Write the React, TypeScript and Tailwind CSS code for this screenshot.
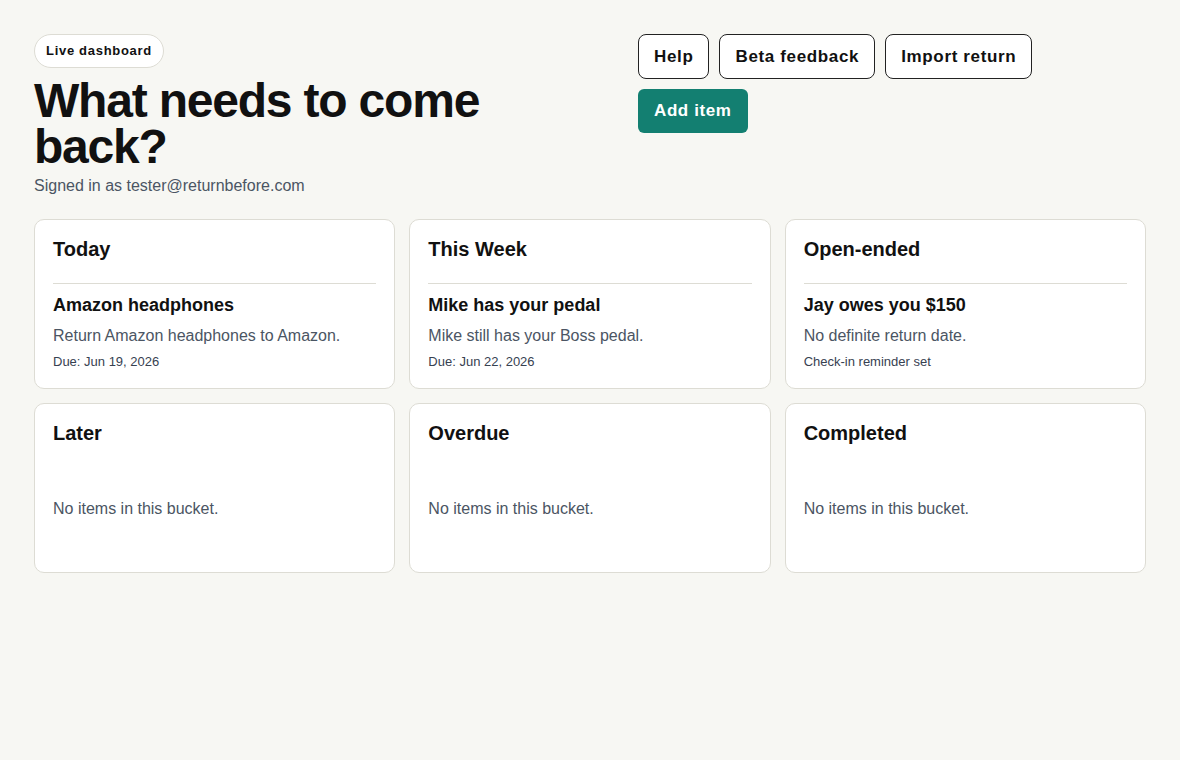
import React from "react";

type Item = { title: string; note: string; meta: string };
type Bucket = { name: string; items: Item[] };

const buckets: Bucket[] = [
  {
    name: "Today",
    items: [
      {
        title: "Amazon headphones",
        note: "Return Amazon headphones to Amazon.",
        meta: "Due: Jun 19, 2026",
      },
    ],
  },
  {
    name: "This Week",
    items: [
      {
        title: "Mike has your pedal",
        note: "Mike still has your Boss pedal.",
        meta: "Due: Jun 22, 2026",
      },
    ],
  },
  {
    name: "Open-ended",
    items: [
      {
        title: "Jay owes you $150",
        note: "No definite return date.",
        meta: "Check-in reminder set",
      },
    ],
  },
  { name: "Later", items: [] },
  { name: "Overdue", items: [] },
  { name: "Completed", items: [] },
];

function BucketCard({ bucket }: { bucket: Bucket }) {
  return (
    <section className="min-h-[170px] rounded-[10px] border border-[#dddcd4] bg-white px-[18px] pt-[15px] pb-[17px]">
      <h2 className="text-[20px] leading-[28px] font-bold text-[#111111]">{bucket.name}</h2>
      {bucket.items.length === 0 ? (
        <p className="mt-[50px] text-[16px] leading-[24px] text-[#4b5563]">No items in this bucket.</p>
      ) : (
        <ul className="mt-[20px]">
          {bucket.items.map((it) => (
            <li key={it.title} className="border-t border-[#dddcd4] pt-[9px]">
              <h3 className="text-[18px] leading-[24px] font-bold text-[#111111]">{it.title}</h3>
              <p className="mt-[7px] text-[16px] leading-[24px] text-[#4b5563]">{it.note}</p>
              <p className="mt-[5px] text-[13px] leading-[18px] text-[#374151]">{it.meta}</p>
            </li>
          ))}
        </ul>
      )}
    </section>
  );
}

const outlineBtn =
  "h-[45px] rounded-[8px] border border-[#222222] bg-white px-[15px] text-[17px] font-bold tracking-[0.65px] text-[#111111]";

export default function App() {
  return (
    <div
      className="min-h-[760px] bg-[#f7f7f3] px-[34px] pt-[34px] pb-[34px] text-[#111111]"
      style={{ fontFamily: '"Liberation Sans", Arial, sans-serif' }}
    >
      <header className="flex items-start justify-between gap-6">
        <div className="flex-1">
          <span className="inline-flex h-[34px] items-center rounded-full border border-[#dddcd4] bg-white px-[11px] text-[13px] font-bold tracking-[0.7px] text-[#111111]">
            Live dashboard
          </span>
          <h1 className="mt-[10px] max-w-[520px] text-[48px] leading-[46px] font-bold tracking-[-1.2px] text-[#111111]">
            What needs to come back?
          </h1>
          <p className="mt-[4px] text-[16px] leading-[24px] text-[#4b5563]">Signed in as tester@returnbefore.com</p>
        </div>
        <div className="w-[508px]">
          <div className="flex w-[420px] flex-wrap gap-[10px]">
            <button className={outlineBtn}>Help</button>
            <button className={outlineBtn}>Beta feedback</button>
            <button className={outlineBtn}>Import return</button>
            <button className="h-[44px] rounded-[6px] bg-[#137f71] px-[16px] text-[17px] font-bold tracking-[0.6px] text-white">
              Add item
            </button>
          </div>
        </div>
      </header>

      <main className="mt-[21px] grid grid-cols-3 gap-x-[14px] gap-y-[14px]">
        {buckets.map((b) => (
          <BucketCard key={b.name} bucket={b} />
        ))}
      </main>
    </div>
  );
}
